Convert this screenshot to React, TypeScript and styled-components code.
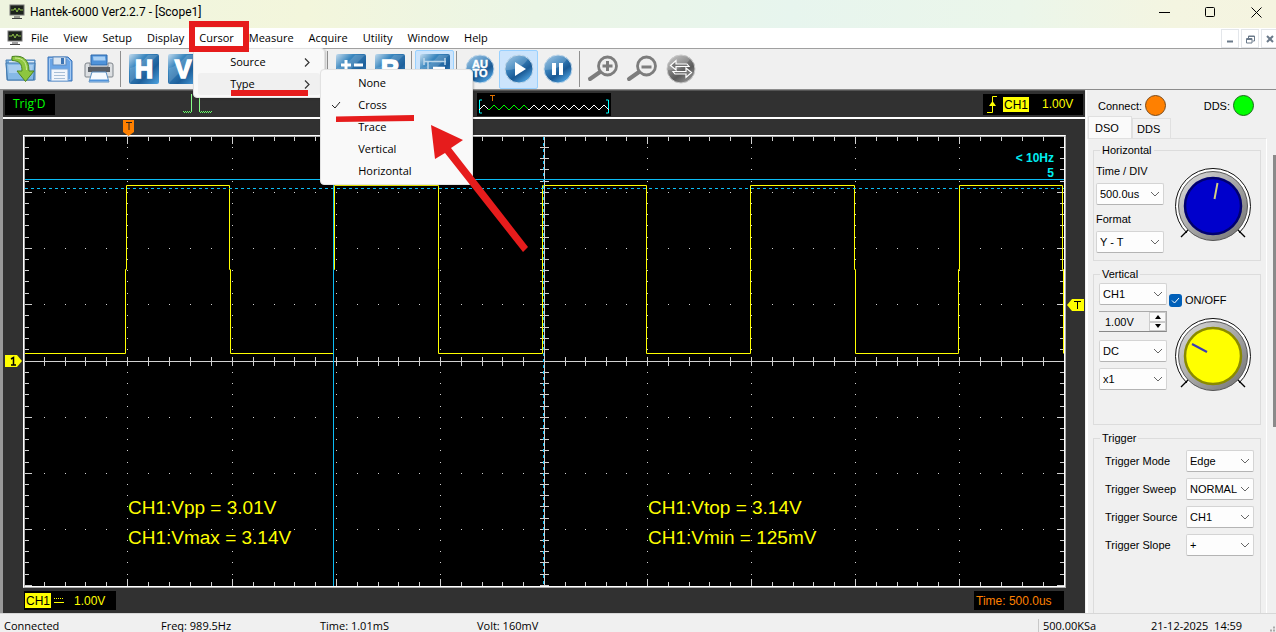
import React from "react";
import styled, { createGlobalStyle, css } from "styled-components";

const ui = `"Open Sans", "Noto Sans", sans-serif`;
const gdi = `"Liberation Sans", Arial, sans-serif`;

const GlobalStyle = createGlobalStyle`
  * { box-sizing: border-box; }
  body { margin: 0; background: #f0f0f0; color: #000; font: 11px/16px ${ui}; }
  button, input, select { font: inherit; color: inherit; margin: 0; }
  svg { display: block; }
`;

/* ---------- window chrome ---------- */
const Window = styled.div`
  position: relative;
  display: flex;
  flex-direction: column;
  height: 100vh;
  min-height: 600px;
  overflow: hidden;
`;
const TitleBar = styled.header`
  display: flex;
  align-items: center;
  gap: 5px;
  height: 28px;
  flex: none;
  padding: 0 5px 4px 9px;
  background: linear-gradient(90deg, #eef4df 0%, #f3f6dc 24%, #ebf5e6 42%, #e7f5ee 62%, #ebf6ea 80%, #f4f5e1 92%, #f5f4e0 100%);
`;
const Title = styled.h1`
  flex: 1;
  margin: 0;
  font: 12px/16px Roboto, sans-serif;
`;
const Caption = styled.button`
  display: grid;
  place-items: center;
  width: 30px;
  height: 24px;
  margin-left: 11px;
  padding: 0;
  border: 0;
  background: none;
`;
const MenuBar = styled.nav`
  display: flex;
  align-items: center;
  gap: 1px;
  height: 20px;
  flex: none;
  padding-left: 7px;
  background: #fff;
`;
const MenuItem = styled.div`
  position: relative;
`;
const MenuButton = styled.button`
  padding: 0 7px;
  border: 0;
  background: none;
  line-height: 20px;
  white-space: nowrap;
`;
const MdiButtons = styled.div`
  display: flex;
  gap: 2px;
  margin-left: auto;
  margin-right: -3px;
`;
const MdiButton = styled.button`
  display: grid;
  place-items: center;
  width: 18px;
  height: 19px;
  padding: 2px 0 0;
  border: 1px solid #e3e6ea;
  background: #fff;
`;
const Popup = styled.div<{ $x: number; $y: number; $w: number }>`
  position: absolute;
  z-index: 5;
  left: ${(p) => p.$x}px;
  top: ${(p) => p.$y}px;
  width: ${(p) => p.$w}px;
  padding: 2px 4px;
  background: #f9f9f9;
  border: 1px solid #e2e2e2;
  border-radius: 4px;
  box-shadow: 1px 1px 2px rgba(0, 0, 0, 0.2);
`;
const PopupRow = styled.button<{ $hot?: boolean }>`
  display: flex;
  align-items: center;
  justify-content: space-between;
  width: 100%;
  height: 22px;
  padding: 0 10px 0 32px;
  border: 0;
  border-radius: 3px;
  background: ${(p) => (p.$hot ? "#f0f0f0" : "none")};
  text-align: left;
`;
const CheckRow = styled(PopupRow)`
  justify-content: flex-start;
  gap: 17px;
  padding-left: 6px;
`;
const CheckSlot = styled.span`
  width: 10px;
`;

/* ---------- toolbar ---------- */
const Toolbar = styled.div`
  display: flex;
  align-items: center;
  flex: none;
  height: 42px;
  padding-left: 1px;
  border-top: 1px solid #a0a0a0;
  border-bottom: 1px solid #8c8c8c;
  background: #f0f0f0;
`;
const Tool = styled.button<{ $on?: boolean }>`
  display: grid;
  place-items: center;
  width: 39px;
  height: 39px;
  padding: 0;
  border: 1px solid ${(p) => (p.$on ? "#99d1ff" : "transparent")};
  border-radius: 2px;
  background: ${(p) => (p.$on ? "#cce4fc" : "none")};
`;
const Separator = styled.span`
  width: 6px;
  height: 36px;
  border-left: 2px solid #f0f0f0;
  background: linear-gradient(90deg, #8f8f8f 1px, transparent 1px);
`;

/* ---------- scope ---------- */
const Main = styled.main`
  display: grid;
  grid-template-columns: minmax(0, 1fr) 190px;
  flex: 1;
  min-height: 0;
`;
const Scope = styled.section`
  display: flex;
  flex-direction: column;
  min-height: 0;
  margin-right: 1px;
  border-left: 3px solid #999;
  background: #313131;
`;
const Strip = styled.div`
  display: flex;
  align-items: center;
  flex: none;
  height: 29px;
  padding: 0 2px;
  border-top: 1px solid #555;
  border-bottom: 2px solid #fff;
`;
const Lcd = styled.div<{ $color: string; $w: number }>`
  display: flex;
  align-items: center;
  width: ${(p) => p.$w}px;
  height: 21px;
  background: #000;
  color: ${(p) => p.$color};
  font: 12px/14px ${gdi};
  white-space: nowrap;
`;
const TrigState = styled(Lcd)`
  padding-left: 8px;
  font-family: ${ui};
`;
const Pulse = styled.div`
  margin-left: 128px;
`;
const Preview = styled.div`
  margin: 0 auto 0 264px;
  background: #000;
`;
const TriggerInfo = styled(Lcd)`
  gap: 13px;
  padding-left: 4px;
  svg { margin-right: -8px; }
`;
const ChannelTag = styled.span`
  padding: 1px 1px 0;
  background: #ff0;
  color: #000;
`;
const Bay = styled.div`
  display: flex;
  flex-direction: column;
  flex: 1;
  min-height: 0;
  padding: 16px 19px 0 20px;
`;
const Plot = styled.div`
  position: relative;
  flex: 1;
  min-height: 0;
  border: 2px ridge #fff;
  background: #000;
`;
const PlotSvg = styled.svg`
  position: absolute;
  inset: 0;
  width: 100%;
  height: 100%;
`;
const Marker = styled.svg<{ $left?: string; $right?: string; $top: string }>`
  position: absolute;
  ${(p) => p.$left && css`left: ${p.$left};`}
  ${(p) => p.$right && css`right: ${p.$right};`}
  top: ${(p) => p.$top};
`;
const Readings = styled.div`
  position: absolute;
  left: 0;
  right: 0;
  bottom: 33px;
  display: grid;
  grid-template-columns: 1fr 1fr;
  padding-left: 103px;
  column-gap: 104px;
  color: #ff0;
  font: 19px/30px ${gdi};
  white-space: nowrap;
`;
const Counter = styled.div`
  position: absolute;
  right: 10px;
  top: 14px;
  color: #00eef0;
  font: bold 12px/15px ${gdi};
  text-align: right;
`;
const BayFoot = styled.div`
  display: flex;
  justify-content: space-between;
  padding: 3px 2px 3px 1px;
`;
const FootLcd = styled(Lcd)`
  height: 19px;
`;
const ChannelInfo = styled(FootLcd)`
  gap: 10px;
  padding-left: 1px;
  svg { margin-left: -7px; }
`;
const TimeInfo = styled(FootLcd)`
  padding-left: 2px;
`;

/* ---------- side panel ---------- */
const Side = styled.aside`
  display: flex;
  flex-direction: column;
  min-height: 0;
  border-left: 1px solid #fff;
  font: 11px/14px ${gdi};
`;
const Lamps = styled.div`
  display: flex;
  justify-content: space-between;
  padding: 5px 22px 0 11px;
`;
const LampLabel = styled.div`
  display: flex;
  align-items: center;
  gap: 3px;
`;
const Lamp = styled.span<{ $c: string; $edge: string }>`
  width: 21px;
  height: 21px;
  border: 1px solid ${(p) => p.$edge};
  border-radius: 50%;
  background: ${(p) => p.$c};
`;
const Tabs = styled.div`
  display: flex;
  align-items: flex-end;
  height: 22px;
  padding-left: 1px;
`;
const Tab = styled.button<{ $on?: boolean }>`
  width: ${(p) => (p.$on ? 44 : 39)}px;
  height: ${(p) => (p.$on ? 22 : 20)}px;
  padding: 0 0 0 ${(p) => (p.$on ? 6 : 4)}px;
  border: 1px solid #e0e0e0;
  border-bottom: 0;
  background: ${(p) => (p.$on ? "#fafafa" : "#f2f2f2")};
  text-align: left;
`;
const ScrollArea = styled.div`
  display: flex;
  flex: 1;
  justify-content: space-between;
  min-height: 0;
`;
const TabPage = styled.div`
  display: flex;
  flex-direction: column;
  flex: 1;
  gap: 6px;
  min-height: 0;
  overflow: hidden;
  margin-right: 6px;
  padding: 4px 5px 0 5px;
  border: 1px solid #fff;
  border-top-color: #e0e0e0;
  border-bottom: 0;
`;
const Thumb = styled.div`
  width: 3px;
  height: 272px;
  margin-top: 17px;
  background: #8a8a8a;
`;
const Group = styled.fieldset<{ $h?: number }>`
  ${(p) => (p.$h ? css`height: ${p.$h}px; flex: none;` : css`flex: 1 0 auto; border-bottom: 0 !important;`)}
  min-width: 0;
  margin: 0;
  padding: 0 6px 0 2px;
  border: 1px solid #dcdcdc;
`;
const Legend = styled.legend`
  margin-left: 4px;
  padding: 0 2px;
  line-height: 14px;
`;
const Split = styled.div`
  display: flex;
  justify-content: space-between;
`;
const Column = styled.div<{ $gap: number; $pad: number; $left?: number }>`
  display: flex;
  flex-direction: column;
  gap: ${(p) => p.$gap}px;
  padding-top: ${(p) => p.$pad}px;
  padding-left: ${(p) => p.$left ?? 0}px;
`;
const Field = styled.label`
  display: flex;
  flex-direction: column;
  gap: 5px;
`;
const RowField = styled.label`
  display: flex;
  align-items: center;
  justify-content: space-between;
`;
const SelectBox = styled.span`
  position: relative;
  display: block;
  width: 68px;
  svg { position: absolute; right: 4px; top: 8px; pointer-events: none; }
`;
const NativeSelect = styled.select`
  display: block;
  width: 100%;
  height: 22px;
  padding: 0 0 0 3px;
  appearance: none;
  border: 1px solid #d4d4d4;
  border-bottom-color: #b4b4b4;
  border-radius: 2px;
  background: #fdfdfd;
`;
const Spin = styled.div`
  display: flex;
  width: 68px;
  height: 21px;
  margin-bottom: 2px;
  border: 1px solid #aaa;
  border-left: 0;
  border-bottom-color: #888;
`;
const SpinInput = styled.input`
  flex: 1;
  min-width: 0;
  padding: 0 0 0 6px;
  border: 0;
  background: #f0f0f0;
`;
const SpinButtons = styled.div`
  display: flex;
  flex-direction: column;
  width: 17px;
`;
const SpinButton = styled.button`
  display: grid;
  place-items: center;
  flex: 1;
  padding: 0;
  border: 1px solid #ccc;
  background: #fafafa;
`;
const KnobColumn = styled.div<{ $pad: number }>`
  padding-top: ${(p) => p.$pad}px;
  padding-right: 2px;
`;
const Toggle = styled.label`
  display: flex;
  align-items: center;
  gap: 3px;
  height: 14px;
  margin: 0 0 11px -5px;
`;
const ToggleBox = styled.span`
  position: relative;
  width: 13px;
  height: 13px;
  svg { position: absolute; left: 2px; top: 3px; pointer-events: none; }
`;
const Check = styled.input`
  display: block;
  width: 13px;
  height: 13px;
  appearance: none;
  border-radius: 3px;
  background: #005fb8;
`;

/* ---------- status bar ---------- */
const Status = styled.footer`
  display: grid;
  grid-template-columns: 157px 159px 157px minmax(0, 1fr) 108px 125px;
  align-items: center;
  flex: none;
  height: 19px;
  padding: 5px 0 0 4px;
  border-top: 1px solid #d7d7d7;
  overflow: hidden;
  line-height: 14px;
  white-space: nowrap;
`;
const Rate = styled.span`
  margin-left: -5px;
  padding-left: 4px;
  border-left: 1px solid #c8c8c8;
`;
const Clock = styled.span`
  white-space: pre;
`;
const Grip = styled.svg`
  position: absolute;
  right: 0;
  bottom: 0;
`;
const Markup = styled.svg`
  position: absolute;
  z-index: 10;
  left: 0;
  top: 0;
  pointer-events: none;
`;

/* ---------- drawings ---------- */
const Monitor = () => (
  <svg width="16" height="16" viewBox="0 0 16 16">
    <rect x="1" y="1" width="14" height="10" fill="#1c221c" stroke="#777" />
    <path d="M2 6h3l1-2 2 4 2-4 1 2h3" stroke="#8fbf4a" fill="none" />
    <path d="M5 13h6M3 14.500h10" stroke="#444" />
  </svg>
);

const Tile = ({ id, children }: { id: string; children: React.ReactNode }) => (
  <svg width="32" height="32" viewBox="0 0 32 32">
    <defs>
      <linearGradient id={id} x1="0" y1="0" x2="1" y2="1">
        <stop offset="0" stopColor="#c4dcee" />
        <stop offset="0.3" stopColor="#3b87bf" />
        <stop offset="0.65" stopColor="#1d5f9b" />
        <stop offset="1" stopColor="#4fa3e0" />
      </linearGradient>
    </defs>
    <rect x="1" y="1" width="30" height="30" rx="2" fill={`url(#${id})`} />
    <path d="M2 30V15C8 14 15 8 20 2h10Z" fill="#fff" opacity=".15" />
    {children}
  </svg>
);

const TileText = ({ children }: { children: string }) => (
  <text x="16" y="25" fontFamily="Liberation Sans" fontWeight="bold" fontSize="25" fill="#fff" stroke="#fff" strokeWidth="1.500" textAnchor="middle">
    {children}
  </text>
);

const Ball = ({ id, gray, children }: { id: string; gray?: boolean; children: React.ReactNode }) => (
  <svg width="32" height="32" viewBox="0 0 32 32">
    <defs>
      <linearGradient id={id} x1="0.1" y1="0" x2="0.8" y2="1">
        <stop offset="0" stopColor={gray ? "#bbb" : "#8ab8dc"} />
        <stop offset="0.35" stopColor={gray ? "#858585" : "#3a83bd"} />
        <stop offset="0.65" stopColor={gray ? "#5a5a5a" : "#1a5994"} />
        <stop offset="1" stopColor={gray ? "#999" : "#57b0ee"} />
      </linearGradient>
    </defs>
    <circle cx="16" cy="16" r="14" fill={`url(#${id})`} stroke={gray ? "#c8c8c8" : "#c2d8ea"} />
    <path d="M3 17A13 13 0 0 1 25 6C20 14 12 17 3 17Z" fill="#fff" opacity=".18" />
    {children}
  </svg>
);

const OpenIcon = () => (
  <svg width="32" height="30" viewBox="0 0 32 30">
    <path d="M1 6h5l2-3h8l2 3h12v20H2Z" fill="#79aede" stroke="#4a80b4" />
    <path d="M4 7h25v14H4Z" fill="#dcebf8" />
    <path d="M1 9h29l-1.500 17h-26Z" fill="#86b9e6" stroke="#4279ae" />
    <path d="M3 11h25l-1 8H4Z" fill="#b6d6f2" opacity=".7" />
    <path d="M7 2.500c10-1.500 17 2 17 14.500h5l-8.500 10.500L12 17h5c0-7-2-10-10-10.500Z" fill="#8dc63f" stroke="#4c8420" />
    <path d="M10 4c8 0 11.500 4 11.500 12" stroke="#cfeb9c" fill="none" />
  </svg>
);

const SaveIcon = () => (
  <svg width="28" height="28" viewBox="0 0 28 28">
    <path d="M2 2h20l4 4v20H2Z" fill="#6aa5e6" stroke="#3d74b8" />
    <path d="M3.500 3.500h18l3 3v18h-21Z" fill="none" stroke="#a4c9f2" />
    <rect x="7" y="2" width="13" height="8" fill="#dbe6f2" stroke="#5f8cc0" />
    <rect x="15" y="3" width="3" height="6" fill="#3c74b4" />
    <rect x="5" y="14" width="17" height="12" fill="#f2f6fb" stroke="#7fa8d6" />
    <path d="M8 17.500h11M8 20.500h11M8 23.500h11" stroke="#a9bfd6" />
  </svg>
);

const PrintIcon = () => (
  <svg width="32" height="32" viewBox="0 0 32 32">
    <path d="M8 2h16v10H8Z" fill="#4f93da" stroke="#2f68aa" />
    <path d="M10 3.500h12l.5 4H10.500Z" fill="#a9d0f4" />
    <path d="M2 12q0-2 2-2h3v4h18v-4h3q2 0 2 2v11q0 1-1 1H3q-1 0-1-1Z" fill="#dcdfe2" stroke="#7d838a" />
    <path d="M5 14h22v5H5Z" fill="#5a5f66" />
    <path d="M9 19h14l3 10H6Z" fill="#f6fafe" stroke="#5a8fc2" />
    <path d="M7 27.500h18" stroke="#4f93da" strokeWidth="2" />
  </svg>
);

const Magnifier = ({ plus }: { plus?: boolean }) => (
  <svg width="32" height="32" viewBox="0 0 32 32">
    <path d="M3 26 13 19" stroke="#7d7d7d" strokeWidth="4" strokeLinecap="round" />
    <circle cx="20.500" cy="13" r="9" fill="#efefef" stroke="#7d7d7d" strokeWidth="2.800" />
    <path d={plus ? "M15.500 13h10M20.500 8v10" : "M15.500 14h10"} stroke="#7d7d7d" strokeWidth="3" />
  </svg>
);

const Chevron = () => (
  <svg width="10" height="6" viewBox="0 0 10 6">
    <path d="M1 1l4 4 4-4" fill="none" stroke="#666" />
  </svg>
);

const SubArrow = () => (
  <svg width="6" height="9" viewBox="0 0 6 9">
    <path d="M1 .5l4 4-4 4" fill="none" stroke="#333" strokeWidth="1.200" />
  </svg>
);

const Knob = ({ id, face, rim, children }: { id: string; face: string; rim: string; children: React.ReactNode }) => (
  <svg width="78" height="76" viewBox="0 0 78 76">
    <defs>
      <linearGradient id={id} x1="0" y1="0" x2="1" y2="1">
        <stop offset="0" stopColor="#e0e0e0" />
        <stop offset="1" stopColor="#6e6e6e" />
      </linearGradient>
    </defs>
    <path d="M13 65A37.500 37.500 0 1 1 65 65" fill="#fff" stroke="#111" />
    <circle cx="39" cy="38" r="34.500" fill={`url(#${id})`} stroke="#555" />
    <path d="M7 69l7-7M71 69l-7-7" stroke="#000" strokeWidth="1.400" />
    <circle cx="39" cy="38" r="28" fill={face} stroke={rim} strokeWidth="2.500" />
    {children}
  </svg>
);

const MAJOR_X = [-2, 102, 207, 311, 415, 519, 622, 726, 830, 934, 1039];
const MAJOR_Y = [-1, 55, 111, 167, 224, 280, 336, 392, 448];
const divide = (majors: number[], bias: number) =>
  majors.slice(1).flatMap((end, i) => [1, 2, 3, 4, 5].map((k) => Math.floor(majors[i] + ((end - majors[i]) * k) / 5 + bias)));
const xs = divide(MAJOR_X, 0.5);
const ys = divide(MAJOR_Y, 0.35);

const rect = (x: number, y: number, w: number, h: number) => `M${x} ${y}h${w}v${h}h${-w}z`;

const gridPath = () => {
  const parts: string[] = [rect(0, 224, 1039, 1), rect(519, 0, 1, 449)];
  xs.forEach((x) => {
    const len = MAJOR_X.includes(x) ? 7 : 4;
    parts.push(rect(x, 0, 1, len), rect(x, 449 - len, 1, len), rect(x, 220, 1, 9));
    MAJOR_Y.forEach((y) => parts.push(rect(x, y, 1, 1)));
  });
  ys.forEach((y) => {
    const len = MAJOR_Y.includes(y) ? 7 : 4;
    parts.push(rect(0, y, len, 1), rect(1039 - len, y, len, 1), rect(515, y, 9, 1));
    MAJOR_X.forEach((x) => parts.push(rect(x, y, 1, 1)));
  });
  return parts.join("");
};

const GRID = gridPath();
const HIGH = 48.5;
const MID = 132.5;
const LOW = 216.5;
const EDGES = [
  [101.5, 100.5],
  [204.5, 205.5],
  [309.5, 308.5],
  [413.5, 413.5],
  [517.5, 517.5],
  [621.5, 621.5],
  [725.5, 725.5],
  [829.5, 830.5],
  [934.5, 933.5],
  [1037.5, 1038.5],
];
const WAVE =
  `M0 ${LOW}` +
  EDGES.map(([hi, lo], i) =>
    i % 2 === 0 ? `H${lo}V${MID}H${hi}V${HIGH}` : `H${hi}V${MID}H${lo}V${LOW}`
  ).join("");

const zigzag = (from: number, count: number) =>
  `M${from} 17` + Array.from({ length: count }, () => "l5-5 5 5").join("");

const Dropdown = ({ value, options, label }: { value: string; options: string[]; label?: string }) => (
  <SelectBox>
    <NativeSelect defaultValue={value} aria-label={label}>
      {options.map((o) => (
        <option key={o}>{o}</option>
      ))}
    </NativeSelect>
    <Chevron />
  </SelectBox>
);

const MENUS_LEFT = ["File", "View", "Setup", "Display"];
const MENUS_RIGHT = ["Measure", "Acquire", "Utility", "Window", "Help"];
const CURSOR_TYPES = ["None", "Cross", "Trace", "Vertical", "Horizontal"];
const TRIGGER_FIELDS: [string, string, string[]][] = [
  ["Trigger Mode", "Edge", ["Edge", "Pulse", "Video"]],
  ["Trigger Sweep", "NORMAL", ["AUTO", "NORMAL", "SINGLE"]],
  ["Trigger Source", "CH1", ["CH1", "CH2"]],
  ["Trigger Slope", "+", ["+", "-"]],
];

export default function App() {
  return (
    <Window>
      <GlobalStyle />
      <TitleBar>
        <Monitor />
        <Title>Hantek-6000 Ver2.2.7 - [Scope1]</Title>
        <Caption aria-label="Minimize">
          <svg width="11" height="11"><path d="M0 5.500h11" stroke="#000" /></svg>
        </Caption>
        <Caption aria-label="Maximize">
          <svg width="11" height="11"><rect x=".5" y=".5" width="9" height="9" rx="1" fill="none" stroke="#000" /></svg>
        </Caption>
        <Caption aria-label="Close">
          <svg width="11" height="11"><path d="M.5 .5l10 10M10.500 .5l-10 10" stroke="#000" /></svg>
        </Caption>
      </TitleBar>

      <MenuBar>
        <Monitor />
        {MENUS_LEFT.map((m) => (
          <MenuButton key={m}>{m}</MenuButton>
        ))}
        <MenuItem>
          <MenuButton>Cursor</MenuButton>
          <Popup $x={1} $y={20} $w={132}>
            <PopupRow>Source<SubArrow /></PopupRow>
            <PopupRow $hot>Type<SubArrow /></PopupRow>
          </Popup>
          <Popup $x={128} $y={41} $w={153}>
            {CURSOR_TYPES.map((t) => (
              <CheckRow key={t}>
                <CheckSlot>
                  {t === "Cross" && (
                    <svg width="10" height="8"><path d="M1 4l3 3 5-6" fill="none" stroke="#222" /></svg>
                  )}
                </CheckSlot>
                {t}
              </CheckRow>
            ))}
          </Popup>
        </MenuItem>
        {MENUS_RIGHT.map((m) => (
          <MenuButton key={m}>{m}</MenuButton>
        ))}
        <MdiButtons>
          <MdiButton aria-label="Minimize document">
            <svg width="8" height="8"><path d="M1 6.500h6" stroke="#6b7a8a" strokeWidth="2" /></svg>
          </MdiButton>
          <MdiButton aria-label="Restore document">
            <svg width="9" height="9"><path d="M2.500 3V1h6v5H6.500M.5 3.500h5.500v4.500H.5ZM.5 4.500H6M3 1.500h5" fill="none" stroke="#6b7a8a" /></svg>
          </MdiButton>
          <MdiButton aria-label="Close document">
            <svg width="8" height="8"><path d="M1 1l6 6M7 1L1 7" stroke="#6b7a8a" strokeWidth="2" /></svg>
          </MdiButton>
        </MdiButtons>
      </MenuBar>

      <Toolbar>
        <Tool aria-label="Open"><OpenIcon /></Tool>
        <Tool aria-label="Save"><SaveIcon /></Tool>
        <Tool aria-label="Print"><PrintIcon /></Tool>
        <Separator />
        <Tool aria-label="Horizontal"><Tile id="th"><TileText>H</TileText></Tile></Tool>
        <Tool aria-label="Vertical"><Tile id="tv"><TileText>V</TileText></Tile></Tool>
        <Tool aria-label="Trigger"><Tile id="tt"><path d="M8 9h16M16 9v16" stroke="#fff" strokeWidth="5" /></Tile></Tool>
        <Tool aria-label="Measure"><Tile id="tm"><path d="M6 22h20M6 17v10M26 17v10" stroke="#fff" strokeWidth="3" /></Tile></Tool>
        <Separator />
        <Tool aria-label="Cursor"><Tile id="tc"><path d="M16 5v22M5 16h22" stroke="#fff" strokeWidth="3" /></Tile></Tool>
        <Separator />
        <Tool aria-label="Math"><Tile id="tp"><path d="M6 12h10M11 7v10M19 12h9M7 21l7 7M14 21l-7 7M19 24h9" stroke="#fff" strokeWidth="3" /></Tile></Tool>
        <Tool aria-label="Reference"><Tile id="tr"><TileText>R</TileText></Tile></Tool>
        <Separator />
        <Tool $on aria-label="Cursor measure">
          <Tile id="tl">
            <path d="M5 8.500h22M5 5v7M26 5v7M9 9v14" stroke="#bcd6ea" strokeWidth="1.500" />
            <path d="M14 15h12M14 20h12" stroke="#fff" strokeWidth="2.500" />
          </Tile>
        </Tool>
        <Separator />
        <Tool aria-label="Auto">
          <Ball id="ba">
            <g fontFamily="Liberation Sans" fontWeight="bold" fontSize="11" fill="#fff" stroke="#fff" strokeWidth=".4" textAnchor="middle">
              <text x="16" y="15">AU</text>
              <text x="16" y="24">TO</text>
            </g>
          </Ball>
        </Tool>
        <Tool $on aria-label="Start"><Ball id="bp"><path d="M12 9l11 7-11 7z" fill="#fff" /></Ball></Tool>
        <Tool aria-label="Pause"><Ball id="bs"><path d="M10 10h4v12h-4zM17 10h4v12h-4z" fill="#fff" /></Ball></Tool>
        <Separator />
        <Tool aria-label="Zoom in"><Magnifier plus /></Tool>
        <Tool aria-label="Zoom out"><Magnifier /></Tool>
        <Tool aria-label="Reset zoom">
          <Ball id="bz" gray>
            <path d="M5.500 12.500l5.500-5v3.500h11l2 2.500h-13v3.500zM26.500 19.500l-5.500 5v-3.500h-11l-2-2.500h13v-3.500z" fill="#777" stroke="#fff" strokeWidth="1.200" />
          </Ball>
        </Tool>
      </Toolbar>

      <Main>
        <Scope>
          <Strip>
            <TrigState $color="#0f0" $w={50}>Trig'D</TrigState>
            <Pulse>
              <svg width="30" height="20">
                <path d="M8.500 17V0M16.500 0v17" stroke="#8f8" fill="none" />
                <path d="M0 17.500h9M16 17.500h13" stroke="#6f6" strokeDasharray="1 1" />
                <path d="M1 18.500h8M17 18.500h12" stroke="#6f6" strokeDasharray="1 1" />
              </svg>
            </Pulse>
            <Preview>
              <svg width="134" height="23">
                <path d="M5 7H2.500v13H5M129 7h2.500v13H129" fill="none" stroke="#0ff" />
                <path d={zigzag(2, 13)} fill="none" stroke="#fff" />
                <path d="M11 16l1 1 5-5 5 5 5-5 5 5 5-5 5 5 5-5 4 4" fill="none" stroke="#0f0" />
                <path d="M13 2.500h5M15.500 2v6" stroke="#e07000" />
              </svg>
            </Preview>
            <TriggerInfo $color="#ff0" $w={100}>
              <svg width="11" height="17" viewBox="0 0 11 17">
                <path d="M0 16.500h5.500V.5H10" fill="none" stroke="#ff0" />
                <path d="M2 10l3.500-5L9 10z" fill="#ff0" />
              </svg>
              <ChannelTag>CH1</ChannelTag>
              <span>1.00V</span>
            </TriggerInfo>
          </Strip>

          <Bay>
            <Plot>
              <PlotSvg viewBox="0 0 1039 449" preserveAspectRatio="none">
                <path d={GRID} fill="#d2d2d2" />
                <path d={WAVE} fill="none" stroke="#ff0" />
                <path d="M0 42.500H1039M308.500 0V449" stroke="#0cbcf4" />
                <path d="M0 51.500H1039M518.500 0V449" stroke="#0cbcf4" strokeDasharray="3 3" />
              </PlotSvg>
              <Readings>
                <span>CH1:Vpp = 3.01V</span>
                <span>CH1:Vtop = 3.14V</span>
                <span>CH1:Vmax = 3.14V</span>
                <span>CH1:Vmin = 125mV</span>
              </Readings>
              <Counter>&lt; 10Hz<br />5</Counter>
              <Marker $left="98px" $top="-17px" width="11" height="16">
                <path d="M0 0h11v12l-5.500 4L0 12z" fill="#ff8000" />
                <path d="M3 2.500h6M6 2v8" stroke="#222" />
              </Marker>
              <Marker $left="-20px" $top="218px" width="17" height="12">
                <path d="M0 0h12l5 6-5 6H0z" fill="#ff0" />
                <path d="M6 4l2.500-1.500V10M6 10h5" fill="none" stroke="#000" strokeWidth="1.500" />
              </Marker>
              <Marker $right="-20px" $top="162px" width="17" height="12">
                <path d="M17 0H5L0 6l5 6h12z" fill="#ff0" />
                <path d="M7 2.500h7M10.500 2v8" stroke="#000" />
              </Marker>
            </Plot>
            <BayFoot>
              <ChannelInfo $color="#ff0" $w={92}>
                <ChannelTag>CH1</ChannelTag>
                <svg width="10" height="8">
                  <path d="M0 1.500h10" stroke="#ff0" strokeDasharray="1 1" />
                  <path d="M0 5.500h10" stroke="#ff0" />
                </svg>
                <span>1.00V</span>
              </ChannelInfo>
              <TimeInfo $color="#ff8000" $w={90}>Time: 500.0us</TimeInfo>
            </BayFoot>
          </Bay>
        </Scope>

        <Side>
          <Lamps>
            <LampLabel>Connect:<Lamp $c="#ff8000" $edge="#7a4a1a" /></LampLabel>
            <LampLabel>DDS:<Lamp $c="#00ff00" $edge="#1a6a1a" /></LampLabel>
          </Lamps>
          <Tabs role="tablist">
            <Tab $on role="tab" aria-selected>DSO</Tab>
            <Tab role="tab">DDS</Tab>
          </Tabs>
          <ScrollArea>
            <TabPage>
              <Group $h={118}>
                <Legend>Horizontal</Legend>
                <Split>
                  <Column $gap={7} $pad={7}>
                    <Field>Time / DIV<Dropdown value="500.0us" options={["200.0us", "500.0us", "1.000ms"]} /></Field>
                    <Field>Format<Dropdown value="Y - T" options={["Y - T", "X - Y"]} /></Field>
                  </Column>
                  <KnobColumn $pad={11}>
                    <Knob id="k1" face="#0000cc" rim="#000070">
                      <path d="M40.500 31l3-16" stroke="#d4d080" strokeWidth="2" />
                    </Knob>
                  </KnobColumn>
                </Split>
              </Group>
              <Group $h={158}>
                <Legend>Vertical</Legend>
                <Split>
                  <Column $gap={6} $pad={2} $left={3}>
                    <Dropdown label="Channel" value="CH1" options={["CH1", "CH2"]} />
                    <Spin>
                      <SpinInput aria-label="Volts per division" defaultValue="1.00V" />
                      <SpinButtons>
                        <SpinButton aria-label="Increase"><svg width="6" height="4"><path d="M0 4l3-4 3 4z" /></svg></SpinButton>
                        <SpinButton aria-label="Decrease"><svg width="6" height="4"><path d="M0 0l3 4 3-4z" /></svg></SpinButton>
                      </SpinButtons>
                    </Spin>
                    <Dropdown label="Coupling" value="DC" options={["DC", "AC", "GND"]} />
                    <Dropdown label="Probe" value="x1" options={["x1", "x10", "x100"]} />
                  </Column>
                  <KnobColumn $pad={12}>
                    <Toggle>
                      <ToggleBox>
                        <Check type="checkbox" defaultChecked />
                        <svg width="9" height="7"><path d="M1 3.500l2.500 2.500L8 1" fill="none" stroke="#fff" /></svg>
                      </ToggleBox>
                      ON/OFF
                    </Toggle>
                    <Knob id="k2" face="#ffff00" rim="#8a8a00">
                      <path d="M33 34l-15-8" stroke="#3c3cb4" strokeWidth="2" />
                    </Knob>
                  </KnobColumn>
                </Split>
              </Group>
              <Group>
                <Legend>Trigger</Legend>
                <Column $gap={6} $pad={5} $left={9}>
                  {TRIGGER_FIELDS.map(([label, value, options]) => (
                    <RowField key={label}>{label}<Dropdown value={value} options={options} /></RowField>
                  ))}
                </Column>
              </Group>
            </TabPage>
            <Thumb />
          </ScrollArea>
        </Side>
      </Main>

      <Status>
        <span>Connected</span>
        <span>Freq: 989.5Hz</span>
        <span>Time: 1.01mS</span>
        <span>Volt: 160mV</span>
        <Rate>500.00KSa</Rate>
        <Clock>21-12-2025  14:59</Clock>
        <Grip width="12" height="8">
          <path d="M6 6.500h2M9 6.500h2M9 3.500h2" stroke="#aaa" strokeWidth="2" />
        </Grip>
      </Status>

      <Markup width="540" height="260">
        <rect x="192" y="24" width="54" height="25" fill="none" stroke="#e61c1c" strokeWidth="6" />
        <path d="M231 90h77v6h-77zM336 116.500l78-1.500v6l-78 1z" fill="#e61c1c" />
        <path d="M431 125l32 15-12 8 77 99-5 5-78-99-10 6z" fill="#e61c1c" />
      </Markup>
    </Window>
  );
}
